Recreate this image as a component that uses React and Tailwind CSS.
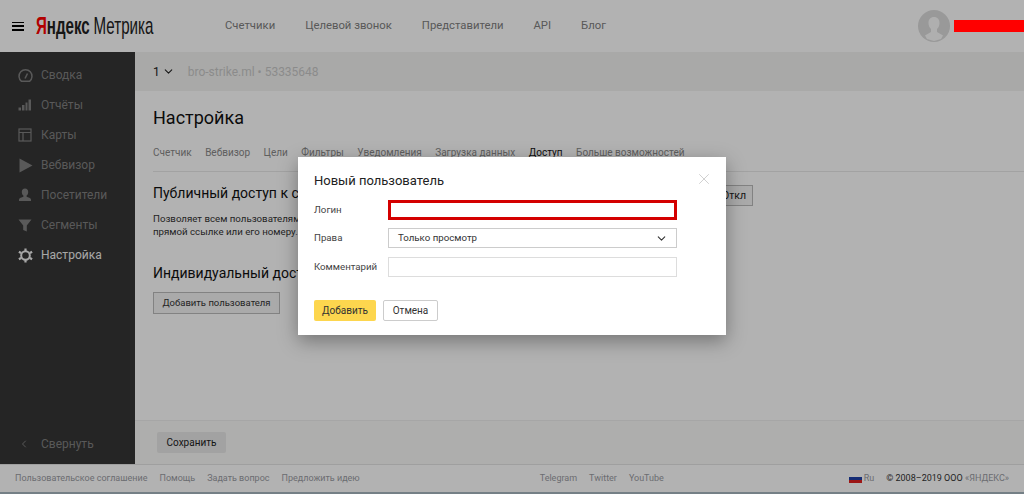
import { ChevronDown, ChevronLeft, X } from "lucide-react";

const font = { fontFamily: 'Roboto, "Liberation Sans", sans-serif' };

function GaugeIcon() {
  return (
    <svg width="15" height="15" viewBox="0 0 15 15" fill="none" stroke="currentColor" strokeWidth="1.5">
      <path d="M3.500 13.300A6.500 6.500 0 1 1 11.500 13.300z" />
      <path d="M7 10.500l2.500-5" />
    </svg>
  );
}

function ReportsIcon() {
  return (
    <svg width="14" height="14" viewBox="0 0 14 14" fill="currentColor">
      <rect x="0.500" y="9.500" width="2.500" height="3" />
      <rect x="4" y="7" width="2.500" height="5.500" />
      <rect x="7.500" y="4.500" width="2" height="8" />
      <rect x="10.500" y="1.500" width="2.500" height="11" />
    </svg>
  );
}

function MapIcon() {
  return (
    <svg width="14" height="14" viewBox="0 0 14 14" fill="none" stroke="currentColor" strokeWidth="1.2">
      <rect x="1" y="1" width="12" height="12" />
      <path d="M1 4.500h12M5 4.500v8.500" />
    </svg>
  );
}

function PlayIcon() {
  return (
    <svg width="15" height="15" viewBox="0 0 15 15" fill="currentColor">
      <path d="M1.500 0.500l13 7-13 7z" />
    </svg>
  );
}

function PersonIcon() {
  return (
    <svg width="14" height="14" viewBox="0 0 14 14" fill="currentColor">
      <path d="M7 0.500c2 0 3.200 1.500 3.200 3.400 0 1.500-.7 3-1.600 3.700v1.200c1.500.5 4.400 1.200 4.400 2.700v1.500H1v-1.500c0-1.500 2.900-2.200 4.400-2.700V7.600C4.500 6.900 3.800 5.400 3.800 3.900 3.800 2 5 .5 7 .5z" />
    </svg>
  );
}

function FilterIcon() {
  return (
    <svg width="14" height="14" viewBox="0 0 14 14" fill="currentColor">
      <path d="M0.500 1.500h13L8.800 7.500V13.500l-3.600-1.500v-4.500z" />
    </svg>
  );
}

function GearIcon() {
  return (
    <svg width="15" height="15" viewBox="0 0 15 15" fill="none" stroke="currentColor">
      <circle cx="7.500" cy="7.500" r="4.300" strokeWidth="2" />
      <path strokeWidth="2.200" d="M7.500 0.500v2.500M7.500 12v2.500M0.900 3.700l2.200 1.300M11.900 10l2.200 1.300M0.900 11.300l2.200-1.300M11.900 5l2.200-1.300" />
    </svg>
  );
}

const sideItems = [
  { label: "Сводка", icon: <GaugeIcon /> },
  { label: "Отчёты", icon: <ReportsIcon /> },
  { label: "Карты", icon: <MapIcon /> },
  { label: "Вебвизор", icon: <PlayIcon /> },
  { label: "Посетители", icon: <PersonIcon /> },
  { label: "Сегменты", icon: <FilterIcon /> },
  { label: "Настройка", icon: <GearIcon />, active: true },
];

const tabs = ["Счетчик", "Вебвизор", "Цели", "Фильтры", "Уведомления", "Загрузка данных", "Доступ", "Больше возможностей"];

export default function App() {
  return (
    <div className="relative flex h-screen w-[1024px] flex-col overflow-hidden bg-white text-[#222]" style={font}>
      <header className="flex h-[52px] shrink-0 items-center pl-[12px]">
        <div className="flex h-[9px] w-[12px] flex-col justify-between">
          <span className="h-[1.5px] bg-black" />
          <span className="h-[1.5px] bg-black" />
          <span className="h-[1.5px] bg-black" />
        </div>
        <div className="ml-[12px] w-[189px] origin-left scale-x-[0.63] whitespace-nowrap text-[24px] leading-none" style={{ fontFamily: '"Liberation Sans", sans-serif' }}>
          <span className="font-bold"><span className="text-[#f00]">Я</span>ндекс</span>
          <span className="ml-[6px] text-[#222]">Метрика</span>
        </div>
        <nav className="flex gap-[30px] text-[11.300px] text-[#808080]">
          <span>Счетчики</span>
          <span>Целевой звонок</span>
          <span>Представители</span>
          <span>API</span>
          <span>Блог</span>
        </nav>
        <svg width="32" height="32" viewBox="0 0 32 32" className="ml-auto mr-[74px]">
          <circle cx="16" cy="16" r="16" fill="#dcdcdc" />
          <path d="M16 7c3.500 0 5.500 2.500 5.500 6 0 2.500-1 4.500-2.500 6v3l6 3.500-2 3.500-7 2-7-2-2-3.500 6-3.500v-3c-1.500-1.500-2.500-3.500-2.500-6 0-3.500 2-6 5.500-6z" fill="#fbfbfb" />
        </svg>
      </header>

      <div className="flex min-h-0 flex-1">
        <aside className="flex w-[135px] shrink-0 flex-col bg-[#353535] pt-[8px] text-[12px] text-[#808080]">
          {sideItems.map((item) => (
            <div key={item.label} className={`flex h-[30px] items-center pl-[18px] ${item.active ? "text-[#f0f0f0]" : ""}`}>
              <span className="flex w-[23px]">{item.icon}</span>
              <span>{item.label}</span>
            </div>
          ))}
          <div className="mt-auto mb-[10px] flex h-[20px] items-center pl-[18px]">
            <span className="flex w-[23px]"><ChevronLeft size={12} /></span>
            <span>Свернуть</span>
          </div>
        </aside>

        <main className="flex min-w-0 flex-1 flex-col">
          <div className="flex h-[39px] shrink-0 items-center bg-[#f3f3f1] pl-[18px] text-[12px]">
            <span>1</span>
            <ChevronDown size={13} className="ml-[2px]" />
            <span className="ml-[13px] text-[#c8c8c8]">bro-strike.ml • 53335648</span>
          </div>
          <div className="flex-1 pl-[18px] pt-[15px]">
            <h1 className="text-[18px] leading-[24px] text-[#111]">Настройка</h1>
            <div className="mt-[16px] flex gap-[13.500px] text-[10px] leading-[14px] text-[#888]">
              {tabs.map((t) => (
                <span key={t} className={t === "Доступ" ? "text-[#111]" : ""}>{t}</span>
              ))}
            </div>
            <div className="mt-[11px] border-t border-[#e8e8e8]" />
            <div className="flex pr-[271px]">
              <h2 className="mt-[11px] flex-1 whitespace-nowrap text-[14px] leading-[20px] text-[#111]">Публичный доступ к статистике</h2>
              <button className="mt-[13px] h-[21px] border border-[#bbb] bg-[#f4f4f4] px-[6px] text-[10.500px]">Откл</button>
            </div>
            <p className="mt-[6px] whitespace-nowrap text-[9.700px] leading-[13px] text-[#333]">
              Позволяет всем пользователям Яндекса просматривать статистику по<br />прямой ссылке или его номеру.
            </p>
            <h2 className="mt-[25px] whitespace-nowrap text-[14px] leading-[20px] text-[#111]">Индивидуальный доступ</h2>
            <button className="mt-[9px] h-[22px] w-[127px] border border-[#bbb] bg-[#f4f4f4] text-[9.500px] text-[#333]">Добавить пользователя</button>
          </div>
          <div className="flex h-[44px] shrink-0 items-center border-t border-[#eee] bg-[#fafaf8] pl-[22px]">
            <button className="h-[21px] w-[69px] rounded-[2px] bg-[#e8e8e8] text-[10px] text-[#222]">Сохранить</button>
          </div>
        </main>
      </div>

      <footer className="flex h-[28px] shrink-0 items-center border-t border-[#e4e4e4] bg-white pl-[15px] pr-[15px] text-[9px] text-[#9a9ca3]">
        <div className="flex gap-[12px]">
          <span>Пользовательское соглашение</span>
          <span>Помощь</span>
          <span>Задать вопрос</span>
          <span>Предложить идею</span>
        </div>
        <div className="ml-[180px] flex gap-[12px]">
          <span>Telegram</span>
          <span>Twitter</span>
          <span>YouTube</span>
        </div>
        <div className="ml-auto flex items-center">
          <span className="flex h-[9px] w-[13px] flex-col">
            <span className="flex-1 bg-white" />
            <span className="flex-1 bg-[#1f3fa8]" />
            <span className="flex-1 bg-[#e02020]" />
          </span>
          <span className="ml-[2px]">Ru</span>
          <span className="ml-[12px] text-[#333]">© 2008–2019 ООО <span className="text-[#9a9ca3]">«ЯНДЕКС»</span></span>
        </div>
      </footer>
      <div className="h-[2px] shrink-0 bg-[#a8b8c0]" />

      <div className="absolute inset-0 bg-black/30" />
      <div className="absolute right-0 top-[20px] h-[12px] w-[70px] bg-[#f00]" />

      <div className="absolute left-[298px] top-[157px] flex h-[178px] w-[428px] flex-col bg-white px-[16px] pt-[14px] shadow-[0_6px_18px_rgba(0,0,0,0.35)]">
        <X size={18} strokeWidth={1.2} className="absolute right-[13px] top-[13px] text-[#ccc]" />
        <h3 className="text-[13px] leading-[20px] text-[#222]">Новый пользователь</h3>
        <div className="mt-[9px] flex h-[20px] items-center text-[9.700px] text-[#444]">
          <span className="w-[74px]">Логин</span>
          <div className="h-[20px] w-[289px] border-[3px] border-[#d40000] bg-white" />
        </div>
        <div className="mt-[8px] flex h-[20px] items-center text-[9.700px] text-[#444]">
          <span className="w-[74px]">Права</span>
          <div className="flex h-[20px] w-[289px] items-center justify-between border border-[#ccc] pl-[9px] pr-[8px] text-[#333]">
            <span>Только просмотр</span>
            <ChevronDown size={13} />
          </div>
        </div>
        <div className="mt-[9px] flex h-[20px] items-center text-[9.700px] text-[#444]">
          <span className="w-[74px]">Комментарий</span>
          <div className="h-[20px] w-[289px] border border-[#ddd]" />
        </div>
        <div className="mt-[23px] flex gap-[7px] text-[10px]">
          <button className="h-[21px] w-[62px] rounded-[2px] bg-[#fdd64e] text-[#333]">Добавить</button>
          <button className="h-[21px] w-[55px] rounded-[2px] border border-[#ccc] text-[#333]">Отмена</button>
        </div>
      </div>
    </div>
  );
}
